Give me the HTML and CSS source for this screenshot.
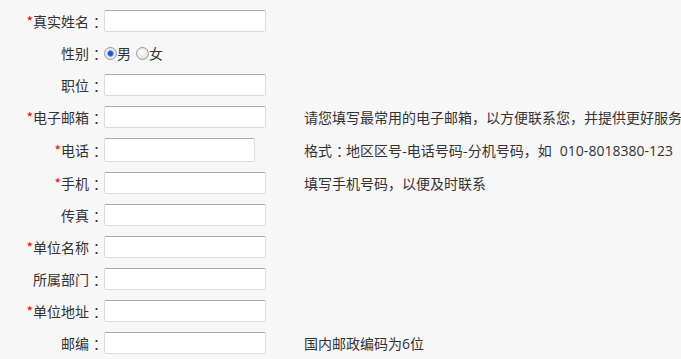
FILE: index.html
```html
<!DOCTYPE html>
<html lang="zh-CN">
<head>
<meta charset="utf-8">
<title>注册信息</title>
<link rel="stylesheet" href="styles.css">
</head>
<body>
<form class="form">
  <div class="row"><label class="label"><span class="req">*</span>真实姓名<span class="colon">：</span></label><input class="field" type="text"></div>
  <div class="row"><label class="label">性别<span class="colon">：</span></label>
    <div class="radios">
      <span class="radio checked"></span><span class="opt">男</span>
      <span class="radio second"></span><span class="opt">女</span>
    </div>
  </div>
  <div class="row"><label class="label">职位<span class="colon">：</span></label><input class="field" type="text"></div>
  <div class="row"><label class="label"><span class="req">*</span>电子邮箱<span class="colon">：</span></label><input class="field" type="text"><span class="hint">请您填写最常用的电子邮箱，以方便联系您，并提供更好服务</span></div>
  <div class="row tall"><label class="label"><span class="req">*</span>电话<span class="colon">：</span></label><input class="field phone" type="text"><span class="hint hint-phone">格式<span class="colon">：</span>地区区号-电话号码-分机号码，如 <span class="num">010-8018380-123</span></span></div>
  <div class="row"><label class="label"><span class="req">*</span>手机<span class="colon">：</span></label><input class="field" type="text"><span class="hint">填写手机号码，以便及时联系</span></div>
  <div class="row"><label class="label">传真<span class="colon">：</span></label><input class="field" type="text"></div>
  <div class="row"><label class="label"><span class="req">*</span>单位名称<span class="colon">：</span></label><input class="field" type="text"></div>
  <div class="row"><label class="label">所属部门<span class="colon">：</span></label><input class="field" type="text"></div>
  <div class="row"><label class="label"><span class="req">*</span>单位地址<span class="colon">：</span></label><input class="field" type="text"></div>
  <div class="row"><label class="label">邮编<span class="colon">：</span></label><input class="field" type="text"><span class="hint">国内邮政编码为<span class="digit">6</span>位</span></div>
</form>
</body>
</html>
```
FILE: styles.css
```css
html, body {
  margin: 0;
  padding: 0;
  background: #f7f7f7;
  overflow: hidden;
}
body {
  font-family: "Noto Sans CJK SC", "Noto Sans", sans-serif;
  font-size: 14px;
  color: #333;
}
.form {
  padding-top: 10px;
  display: flex;
  flex-direction: column;
  gap: 10px;
}
.row {
  display: flex;
  align-items: center;
  height: 22px;
  white-space: nowrap;
}
.row.tall {
  height: 24px;
}
.label {
  width: 103px;
  flex: none;
  text-align: right;
  line-height: 22px;
}
.colon {
  padding-left: 4px;
  letter-spacing: -4px;
}
.req {
  color: #f00;
}
.field {
  box-sizing: border-box;
  width: 162px;
  height: 22px;
  margin: 0 0 0 1px;
  padding: 0 4px;
  background: #fff;
  border: 1px solid #d9dbe6;
  border-top-color: #a9a9a9;
  border-radius: 2px;
  flex: none;
  font: inherit;
  outline: none;
}
.field.phone {
  width: 151px;
  height: 24px;
}
.hint {
  margin-left: 38px;
  line-height: 22px;
}
.hint-phone {
  margin-left: 49px;
}
.num {
  font-family: "Open Sans", "Noto Sans", sans-serif;
  padding-left: 5px;
}
.digit {
  font-family: "Open Sans", "Noto Sans", sans-serif;
}
.radios {
  display: flex;
  align-items: center;
  margin-left: 1px;
}
.radio {
  box-sizing: border-box;
  width: 13px;
  height: 13px;
  border-radius: 50%;
  border: 1px solid #9a9a9a;
  background: radial-gradient(circle at 40% 35%, #fff 0, #e6e6e6 60%, #cfcfcf 100%);
  flex: none;
}
.radio.checked {
  background: radial-gradient(circle at 50% 50%, #1c4fb0 0, #2a66d6 2.5px, #dfe6f2 3.5px, #f2f2f2 100%);
}
.radio.second {
  margin-left: 5px;
}
.opt {
  line-height: 22px;
}
```
